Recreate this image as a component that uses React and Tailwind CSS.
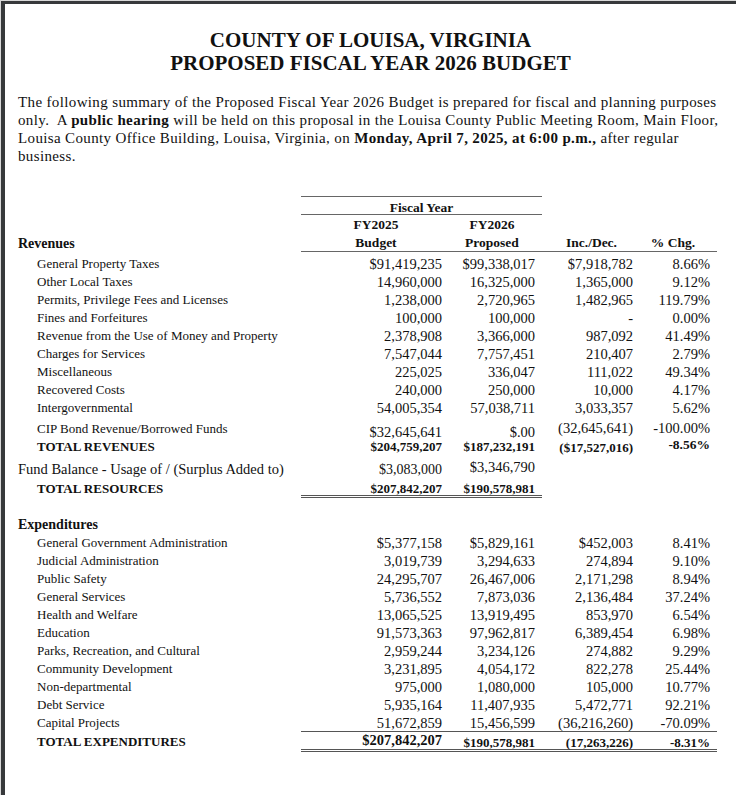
import React from 'react';

const revenues = [
  ['General Property Taxes', '$91,419,235', '$99,338,017', '$7,918,782', '8.66%'],
  ['Other Local Taxes', '14,960,000', '16,325,000', '1,365,000', '9.12%'],
  ['Permits, Privilege Fees and Licenses', '1,238,000', '2,720,965', '1,482,965', '119.79%'],
  ['Fines and Forfeitures', '100,000', '100,000', '-', '0.00%'],
  ['Revenue from the Use of Money and Property', '2,378,908', '3,366,000', '987,092', '41.49%'],
  ['Charges for Services', '7,547,044', '7,757,451', '210,407', '2.79%'],
  ['Miscellaneous', '225,025', '336,047', '111,022', '49.34%'],
  ['Recovered Costs', '240,000', '250,000', '10,000', '4.17%'],
  ['Intergovernmental', '54,005,354', '57,038,711', '3,033,357', '5.62%'],
];

const expenditures = [
  ['General Government Administration', '$5,377,158', '$5,829,161', '$452,003', '8.41%'],
  ['Judicial Administration', '3,019,739', '3,294,633', '274,894', '9.10%'],
  ['Public Safety', '24,295,707', '26,467,006', '2,171,298', '8.94%'],
  ['General Services', '5,736,552', '7,873,036', '2,136,484', '37.24%'],
  ['Health and Welfare', '13,065,525', '13,919,495', '853,970', '6.54%'],
  ['Education', '91,573,363', '97,962,817', '6,389,454', '6.98%'],
  ['Parks, Recreation, and Cultural', '2,959,244', '3,234,126', '274,882', '9.29%'],
  ['Community Development', '3,231,895', '4,054,172', '822,278', '25.44%'],
  ['Non-departmental', '975,000', '1,080,000', '105,000', '10.77%'],
  ['Debt Service', '5,935,164', '11,407,935', '5,472,771', '92.21%'],
  ['Capital Projects', '51,672,859', '15,456,599', '(36,216,260)', '-70.09%'],
];

// one line of the table: label + four right-aligned number cells
const Row = ({ label, values }) => (
  <div className="flex h-[18px] leading-[18px]">
    <div className="w-[283px] pl-[19px] text-[13px] whitespace-nowrap">{label}</div>
    <div className="w-[141px] text-right text-[14.5px]">{values[0]}</div>
    <div className="w-[100px] pr-[7px] text-right text-[14.5px]">{values[1]}</div>
    <div className="w-[91px] text-right text-[14.5px]">{values[2]}</div>
    <div className="w-[84px] pr-[7px] text-right text-[14.5px]">{values[3]}</div>
  </div>
);

export default function App() {
  return (
    <div className="min-h-screen bg-[#d8d8d8] pl-px pt-px font-['Liberation_Serif',serif] text-[#111]">
      <div className="h-[794px] border-l-4 border-t-[3px] border-[#37393b] bg-white">
        {/* heading */}
        <div className="pt-[25px] text-center text-[21px] font-bold leading-[23px]">
          <div>COUNTY OF LOUISA, VIRGINIA</div>
          <div>PROPOSED FISCAL YEAR 2026 BUDGET</div>
        </div>

        <div className="mt-[18px] pl-[13px] text-[15px] leading-[18px] whitespace-nowrap tracking-[0.36px]">
          <div>The following summary of the Proposed Fiscal Year 2026 Budget is prepared for fiscal and planning purposes</div>
          <div>
            only.&nbsp; A <b>public hearing</b> will be held on this proposal in the Louisa County Public Meeting Room, Main Floor,
          </div>
          <div>
            Louisa County Office Building, Louisa, Virginia, on <b>Monday, April 7, 2025, at 6:00 p.m.,</b> after regular
          </div>
          <div>business.</div>
        </div>

        {/* table */}
        <div className="mt-[31px] pl-[13px]">
          <div className="flex">
            <div className="w-[283px]" />
            <div className="w-[241px] border-y border-[#666] h-[19px] pt-[2px] text-center text-[13.5px] font-bold leading-[17px]">
              Fiscal Year
            </div>
          </div>

          <div className="mt-px flex h-[18px] text-[13.5px] font-bold leading-[18px]">
            <div className="w-[283px]" />
            <div className="w-[141px] pl-[9px] text-center">FY2025</div>
            <div className="w-[100px] text-center">FY2026</div>
          </div>

          <div className="flex h-[18px] leading-[18px]">
            <div className="w-[283px] pt-px text-[14px] font-bold">Revenues</div>
            <div className="flex border-b border-[#666] text-[13.5px] font-bold leading-[17px]">
              <div className="w-[141px] pl-[9px] text-center">Budget</div>
              <div className="w-[100px] text-center">Proposed</div>
              <div className="w-[91px] pl-[8px] text-center">Inc./Dec.</div>
              <div className="w-[84px] pr-[4px] text-center">% Chg.</div>
            </div>
          </div>

          <div className="mt-[3px]">
            {revenues.map((r) => (
              <Row key={r[0]} label={r[0]} values={r.slice(1)} />
            ))}
          </div>

          <div className="mt-[3px] flex h-[18px] leading-[18px]">
            <div className="w-[283px] pl-[19px] text-[13px]">CIP Bond Revenue/Borrowed Funds</div>
            <div className="w-[141px] pt-[3px] text-right text-[14.5px]">$32,645,641</div>
            <div className="w-[100px] pr-[7px] pt-[3px] text-right text-[14.5px]">$.00</div>
            <div className="w-[91px] -mt-px text-right text-[14.5px]">(32,645,641)</div>
            <div className="w-[84px] pr-[7px] -mt-px text-right text-[14.5px]">-100.00%</div>
          </div>

          <div className="flex h-[18px] font-bold leading-[18px] text-[13px]">
            <div className="w-[283px] pl-[19px]">TOTAL REVENUES</div>
            <div className="w-[141px] text-right">$204,759,207</div>
            <div className="w-[100px] pr-[7px] text-right">$187,232,191</div>
            <div className="w-[91px] pt-px text-right">($17,527,016)</div>
            <div className="w-[84px] pr-[7px] -mt-[2px] text-right text-[13.5px]">-8.56%</div>
          </div>

          <div className="mt-[4px] flex h-[18px] leading-[18px]">
            <div className="w-[283px] text-[14.5px] whitespace-nowrap">Fund Balance - Usage of / (Surplus Added to)</div>
            <div className="w-[141px] pt-px text-right text-[14px]">$3,083,000</div>
            <div className="w-[100px] pr-[7px] -mt-[2px] text-right text-[14.5px]">$3,346,790</div>
          </div>

          <div className="mt-[2px] flex leading-[18px] text-[13px] font-bold">
            <div className="w-[283px] pl-[19px]">TOTAL RESOURCES</div>
            <div className="flex h-[18px] border-b-[3px] border-double border-[#555]">
              <div className="w-[141px] text-right">$207,842,207</div>
              <div className="w-[100px] pr-[7px] text-right">$190,578,981</div>
            </div>
          </div>

          <div className="mt-[18px] h-[18px] text-[14px] font-bold leading-[18px]">Expenditures</div>

          <div>
            {expenditures.map((r) => (
              <Row key={r[0]} label={r[0]} values={r.slice(1)} />
            ))}
          </div>

          <div className="-mt-px flex leading-[18px] font-bold text-[13px]">
            <div className="w-[283px] pl-[19px] pt-[2px]">TOTAL EXPENDITURES</div>
            <div className="flex h-[21px] border-y border-b-[3px] border-[#555] [border-bottom-style:double]">
              <div className="w-[141px] -mt-[1px] text-right text-[14.5px]">$207,842,207</div>
              <div className="w-[100px] pr-[7px] pt-[2px] text-right">$190,578,981</div>
              <div className="w-[91px] pt-[2px] text-right">(17,263,226)</div>
              <div className="w-[84px] pr-[7px] pt-[2px] text-right">-8.31%</div>
            </div>
          </div>
        </div>
      </div>
    </div>
  );
}
